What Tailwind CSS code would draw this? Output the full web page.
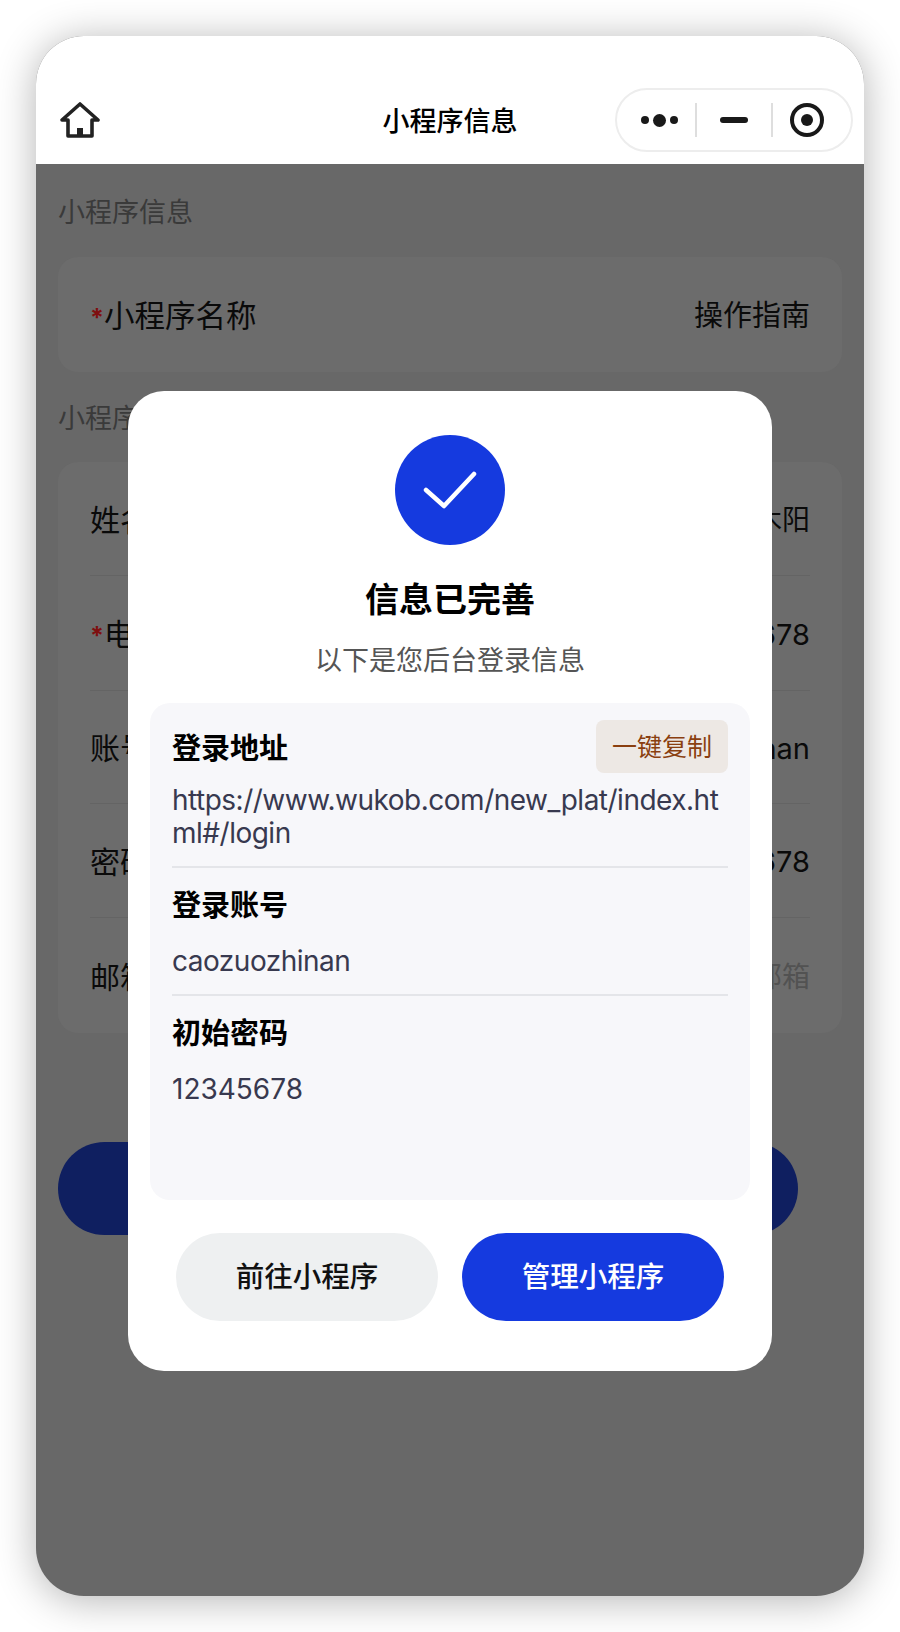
<!DOCTYPE html>
<html lang="zh-CN">
<head>
    <meta charset="UTF-8">
    <title>小程序信息</title>
    <script src="https://cdn.jsdelivr.net/npm/@tailwindcss/browser@4"></script>
</head>
<body class="bg-white w-[900px] h-[1632px] overflow-hidden font-['Inter','Noto_Sans_CJK_SC',sans-serif]">
<div class="p-[36px]">
    <div class="relative w-[828px] h-[1560px] rounded-[48px] overflow-hidden bg-[#686868] shadow-[0_4px_40px_rgba(0,0,0,0.3)]">
        <!-- nav bar -->
        <header class="relative h-[128px] bg-white">
            <svg class="absolute left-[23px] top-[66px]" width="42" height="36" viewBox="0 0 42 36" fill="none" stroke="#222" stroke-width="3.6" stroke-linejoin="round">
                <path d="M21 2 L39 18 H33 V34 H9 V18 H3 Z"/>
                <path d="M18 34 V26 H24 V34 Z" fill="#222" stroke="none"/>
            </svg>
            <div class="absolute left-0 right-0 top-[66px] text-center text-[27px] leading-[40px] font-medium text-black">小程序信息</div>
            <div class="absolute left-[579px] top-[52px] w-[238px] h-[64px] rounded-full border-2 border-[#ededed] flex items-center bg-white">
                <div class="w-[78px] flex justify-center items-center gap-[4px] pl-[6px]">
                    <span class="w-[8px] h-[8px] rounded-full bg-[#191919]"></span>
                    <span class="w-[13px] h-[13px] rounded-full bg-[#191919]"></span>
                    <span class="w-[8px] h-[8px] rounded-full bg-[#191919]"></span>
                </div>
                <span class="w-[2px] h-[34px] bg-[#dedede]"></span>
                <div class="w-[74px] flex justify-center"><span class="w-[28px] h-[6px] rounded-full bg-[#191919]"></span></div>
                <span class="w-[2px] h-[34px] bg-[#dedede]"></span>
                <div class="flex-1 flex justify-center pr-[10px]">
                    <span class="w-[34px] h-[34px] rounded-full border-[4px] border-[#191919] flex items-center justify-center"><span class="w-[12px] h-[12px] rounded-full bg-[#191919]"></span></span>
                </div>
            </div>
        </header>

        <!-- page behind the dialog -->
        <main class="px-[22px]">
            <div class="mt-[29px] text-[27px] leading-[40px] text-[#3a3a3a]">小程序信息</div>
            <div class="mt-[24px] h-[115px] pt-[2px] rounded-[20px] bg-[#6c6c6c] pl-[32px] pr-[32px] flex items-center justify-between text-[#0a0a0a]">
                <span class="text-[30.5px]"><span class="font-bold text-[25px] text-[#7f0f0f]">*</span>小程序名称</span>
                <span class="text-[29px]">操作指南</span>
            </div>
            <div class="mt-[27px] text-[27px] leading-[40px] text-[#3a3a3a]">小程序信息</div>
            <div class="mt-[23px] rounded-[20px] bg-[#6c6c6c] pl-[32px] pr-[32px] text-[#0a0a0a]">
                <div class="h-[114px] pt-[3px] flex items-center justify-between border-b border-[#646464]"><span class="text-[30px]">姓名</span><span class="text-[28px]">木阳</span></div>
                <div class="h-[115px] pt-[3px] flex items-center justify-between border-b border-[#646464]"><span class="text-[30px]"><span class="font-bold text-[25px] text-[#7f0f0f]">*</span>电话</span><span class="text-[29px]">12345678</span></div>
                <div class="h-[113px] pt-[3px] flex items-center justify-between border-b border-[#646464]"><span class="text-[30px]">账号</span><span class="text-[29px]">caozuozhinan</span></div>
                <div class="h-[114px] pt-[3px] flex items-center justify-between border-b border-[#646464]"><span class="text-[30px]">密码</span><span class="text-[29px]">12345678</span></div>
                <div class="h-[115px] pt-[3px] flex items-center justify-between"><span class="text-[30px]">邮箱</span><span class="text-[28px] text-[#525252]">请输入邮箱</span></div>
            </div>
            <div class="mt-[109px] w-[740px] h-[93px] rounded-full bg-[#0f1f60]"></div>
        </main>

        <!-- dialog -->
        <div class="absolute left-[92px] top-[355px] w-[644px] h-[980px] rounded-[36px] bg-white px-[22px] pt-[44px] flex flex-col items-center">
            <div class="w-[110px] h-[110px] rounded-full bg-[#153adf] flex items-center justify-center">
                <svg width="54" height="38" viewBox="0 0 54 38" fill="none" stroke="#fff" stroke-width="4.5" stroke-linecap="round" stroke-linejoin="round"><path d="M3 19 L21 35 L51 3"/></svg>
            </div>
            <h2 class="mt-[32px] text-[34px] leading-[46px] font-bold text-black">信息已完善</h2>
            <p class="mt-[18px] text-[27px] leading-[40px] text-[#555]">以下是您后台登录信息</p>
            <div class="mt-[22px] w-[600px] h-[497px] rounded-[20px] bg-[#f7f7fa] px-[22px] text-[28px] text-[#38394f]">
                <div class="pt-[17px] pb-[16px] border-b-2 border-[#e4e5e9]">
                    <div class="flex items-center justify-between h-[53px]">
                        <span class="font-bold text-[29px] text-black pt-[4px]">登录地址</span>
                        <button class="w-[132px] h-[53px] pt-[2px] rounded-[8px] bg-[#ede8e4] text-[25px] text-[#8a3f10]">一键复制</button>
                    </div>
                    <div class="mt-[11px] leading-[33px] break-all tracking-[-0.5px]">https://www.wukob.com/new_plat/index.html#/login</div>
                </div>
                <div class="border-b-2 border-[#e4e5e9] h-[128px] pt-[18px]">
                    <div class="font-bold text-[29px] leading-[40px] text-black">登录账号</div>
                    <div class="mt-[15px] leading-[40px] tracking-[-0.5px]">caozuozhinan</div>
                </div>
                <div class="pt-[18px]">
                    <div class="font-bold text-[29px] leading-[40px] text-black">初始密码</div>
                    <div class="mt-[15px] leading-[40px]">12345678</div>
                </div>
            </div>
            <div class="mt-[33px] flex gap-[24px]">
                <button class="w-[262px] h-[88px] rounded-full bg-[#eef0f1] text-[28.5px] font-medium text-[#111]">前往小程序</button>
                <button class="w-[262px] h-[88px] rounded-full bg-[#153adf] text-[28.5px] font-medium text-white">管理小程序</button>
            </div>
        </div>
    </div>
</div>
</body>
</html>
